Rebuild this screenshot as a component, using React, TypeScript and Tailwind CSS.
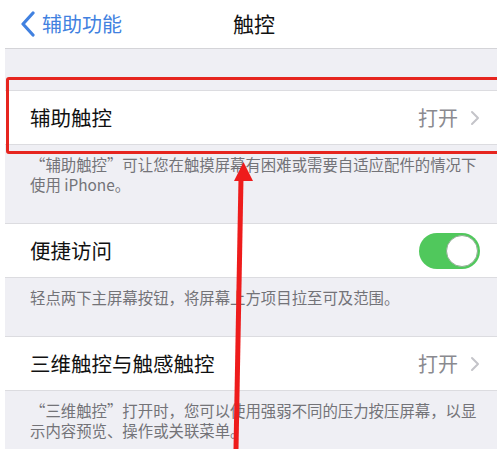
import { FC } from 'react';

const font = { fontFamily: '"Noto Sans CJK SC", "Noto Sans", sans-serif' };

const Chevron: FC = () => (
  <svg width="10" height="16" viewBox="0 0 10 16" className="ml-[12px]">
    <path d="M2 2 L8 8 L2 14" fill="none" stroke="#c4c4c9" strokeWidth="2" strokeLinecap="round" strokeLinejoin="round" />
  </svg>
);

interface RowProps {
  label: string;
  value?: string;
  toggle?: boolean;
}

const Row: FC<RowProps> = ({ label, value, toggle }) => (
  <div className="flex items-center h-[55px] bg-white border-y border-[#dcdce0] pl-[25px] pr-[17px]">
    <span className="flex-1 text-[20.5px] text-[#111]">{label}</span>
    {value && (
      <span className="flex items-center text-[20px] text-[#8a8a8f]">
        {value}
        <Chevron />
      </span>
    )}
    {toggle && (
      <div className="flex items-center justify-end w-[61px] h-[36px] rounded-full bg-[#50c85c] p-[2px]">
        <div className="w-[32px] h-[32px] rounded-full bg-white border border-[#8fae92]" />
      </div>
    )}
  </div>
);

const Footer: FC<{ lines: string[] }> = ({ lines }) => (
  <div className="pl-[25px] pr-[10px] pt-[9px] pb-[29px] text-[15.4px] leading-[20px] text-[#737378]">
    {lines.map((l) => (
      <div key={l}>{l}</div>
    ))}
  </div>
);

export default function App() {
  return (
    <div className="relative w-[497px] h-[449px] overflow-hidden bg-white pl-[5px]" style={font}>
      <div className="h-full bg-[#efeff4]">
        <div className="grid grid-cols-[1fr_auto_1fr] items-center h-[49px] bg-white border-b border-[#d4d4d8]">
          <div className="flex items-center pl-[15px] text-[20px] text-[#4181e0]">
            <svg width="16" height="26" viewBox="0 0 16 26" className="mr-[6px]">
              <path d="M13 2 L3 13 L13 24" fill="none" stroke="#4181e0" strokeWidth="3.2" strokeLinecap="round" strokeLinejoin="round" />
            </svg>
            辅助功能
          </div>
          <div className="ml-[6px] text-[21px] text-[#111]">触控</div>
          <div />
        </div>
        <div className="h-[41px]" />
        <Row label="辅助触控" value="打开" />
        <Footer lines={['“辅助触控”可让您在触摸屏幕有困难或需要自适应配件的情况下', '使用 iPhone。']} />
        <Row label="便捷访问" toggle />
        <Footer lines={['轻点两下主屏幕按钮，将屏幕上方项目拉至可及范围。']} />
        <Row label="三维触控与触感触控" value="打开" />
        <Footer lines={['“三维触控”打开时，您可以使用强弱不同的压力按压屏幕，以显', '示内容预览、操作或关联菜单。']} />
      </div>

      <div className="absolute left-[6px] top-[77px] w-[500px] h-[77px] border-[3px] border-[#e6251f] rounded-[3px]" />

      <svg className="absolute left-0 top-0" width="497" height="449" viewBox="0 0 497 449">
        <path d="M243.5 162 L253 181 L234 181 Z" fill="#ee1c1c" />
        <path d="M241 178 L236 449" stroke="#ee1c1c" strokeWidth="5" />
      </svg>
    </div>
  );
}
